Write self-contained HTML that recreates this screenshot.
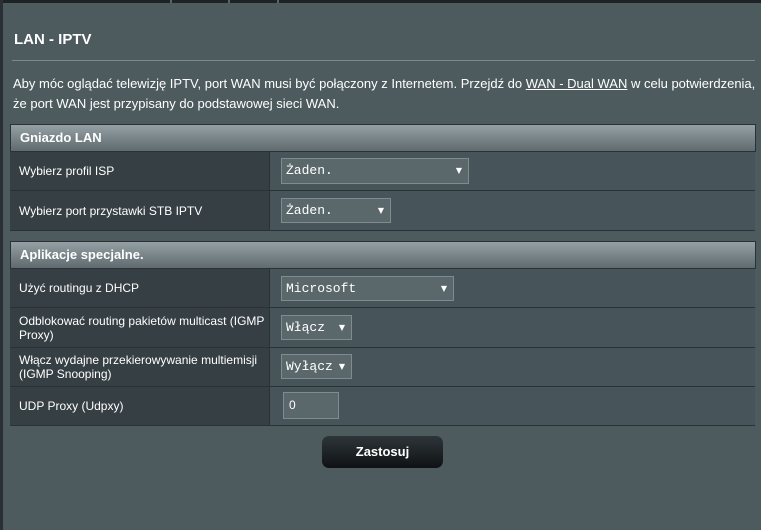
<!DOCTYPE html>
<html><head><meta charset="utf-8"><style>
body{margin:0;width:761px;height:530px;background:#4d5a5e;font-family:"Liberation Sans",Arial,sans-serif;color:#fff;position:relative;overflow:hidden}
.top{position:absolute;left:0;top:0;width:761px;height:3px;background:#1e2225}
.top span{position:absolute;top:0;width:2px;height:3px;background:#566}
.lb{position:absolute;left:0;top:0;width:3px;height:530px;background:#2a3034}
h1{position:absolute;left:14px;top:31px;margin:0;font-size:15px;font-weight:bold}
.sep{position:absolute;left:12px;top:60px;width:743px;height:1px;background:#7d898d}
p{position:absolute;left:13px;top:74px;margin:0;font-size:13px;line-height:20px;width:750px}
.hd{position:absolute;left:10px;height:26px;background:linear-gradient(#95a0a4,#5f6b6f);border:1px solid #2a3236;font-size:13px;font-weight:bold;line-height:26px;padding-left:9px;width:735px}
.row{position:absolute;left:10px;width:745px;border-bottom:1px solid #2a3236;background:#475459}
.row .l{position:absolute;left:0;top:0;bottom:0;width:260px;background:#363f43;border-right:1px solid #2a3236;font-size:12px;line-height:14px;padding-left:9px;box-sizing:border-box;display:flex;align-items:center}
.sel{position:absolute;background:#5a676b;border:1px solid #7f8b8e;font-family:"Liberation Mono","DejaVu Sans Mono",monospace;font-size:13px;line-height:24px;padding-left:4px;box-sizing:border-box}
.sel:after{content:"▼";position:absolute;right:6px;top:0;font-size:8px;font-family:"DejaVu Sans",sans-serif}
.inp{position:absolute;left:283px;top:392px;width:56px;height:27px;background:#5a676b;border:1px solid #7f8b8e;box-sizing:border-box;padding-left:5px;font-size:12px;line-height:25px}
.btn{position:absolute;left:322px;top:436px;width:121px;height:32px;border-radius:7px;background:linear-gradient(#2e3539,#0f1214);font-size:13px;font-weight:bold;text-align:center;line-height:32px}
</style></head><body>
<div class="top"><span style="left:170px"></span><span style="left:228px"></span><span style="left:277px"></span></div>
<div class="lb"></div>
<h1>LAN - IPTV</h1>
<div class="sep"></div>
<p>Aby móc oglądać telewizję IPTV, port WAN musi być połączony z Internetem. Przejdź do <u>WAN - Dual WAN</u> w celu potwierdzenia, że port WAN jest przypisany do podstawowej sieci WAN.</p>
<div class="hd" style="top:124px">Gniazdo LAN</div>
<div class="row" style="top:152px;height:38px"><div class="l">Wybierz profil ISP</div></div>
<div class="row" style="top:191px;height:39px"><div class="l">Wybierz port przystawki STB IPTV</div></div>
<div class="hd" style="top:241px">Aplikacje specjalne.</div>
<div class="row" style="top:269px;height:38px"><div class="l">Użyć routingu z DHCP</div></div>
<div class="row" style="top:308px;height:39px"><div class="l">Odblokować routing pakietów multicast (IGMP Proxy)</div></div>
<div class="row" style="top:348px;height:38px"><div class="l">Włącz wydajne przekierowywanie multiemisji (IGMP Snooping)</div></div>
<div class="row" style="top:387px;height:38px"><div class="l">UDP Proxy (Udpxy)</div></div>
<div class="sel" style="left:281px;top:158px;width:188px;height:26px">Żaden.</div>
<div class="sel" style="left:281px;top:198px;width:110px;height:25px">Żaden.</div>
<div class="sel" style="left:281px;top:276px;width:173px;height:25px">Microsoft</div>
<div class="sel" style="left:281px;top:315px;width:71px;height:25px">Włącz</div>
<div class="sel" style="left:281px;top:354px;width:71px;height:25px">Wyłącz</div>
<div class="inp">0</div>
<div class="btn">Zastosuj</div>
</body></html>
